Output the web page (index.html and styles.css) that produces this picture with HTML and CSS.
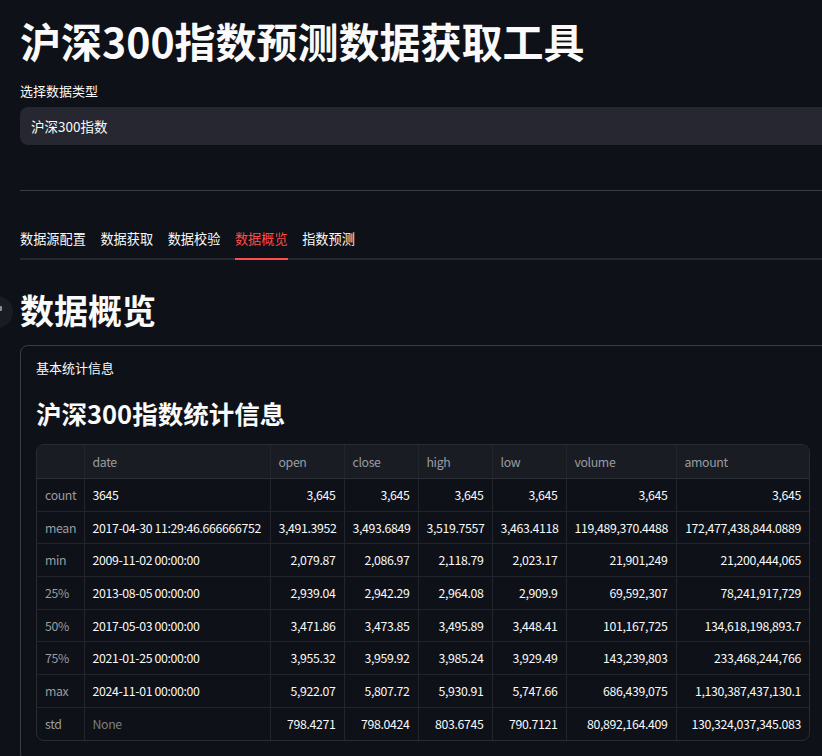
FILE: index.html
```html
<!DOCTYPE html>
<html lang="zh">
<head>
<meta charset="utf-8">
<title>沪深300指数预测数据获取工具</title>
<link rel="stylesheet" href="styles.css">
</head>
<body>
<div class="main">
  <h1 class="title">沪深300指数预测数据获取工具</h1>
  <div class="label">选择数据类型</div>
  <div class="select">沪深300指数</div>
  <div class="rule"></div>
  <div class="tabs">
    <div class="tab">数据源配置</div>
    <div class="tab">数据获取</div>
    <div class="tab">数据校验</div>
    <div class="tab active">数据概览</div>
    <div class="tab">指数预测</div>
  </div>
  <div class="section-head">
    <span class="side-btn"></span>
    <h2 class="h2">数据概览</h2>
  </div>
  <div class="box">
    <div class="box-label">基本统计信息</div>
    <h3 class="h3">沪深300指数统计信息</h3>
    <div class="grid-wrap">
      <table class="grid">
        <colgroup>
          <col class="c-idx"><col class="c-date"><col class="c-num"><col class="c-num"><col class="c-num"><col class="c-num"><col class="c-vol"><col class="c-amt">
        </colgroup>
        <thead>
          <tr><th></th><th>date</th><th>open</th><th>close</th><th>high</th><th>low</th><th>volume</th><th>amount</th></tr>
        </thead>
        <tbody>
          <tr><td class="idx">count</td><td>3645</td><td class="n">3,645</td><td class="n">3,645</td><td class="n">3,645</td><td class="n">3,645</td><td class="n">3,645</td><td class="n">3,645</td></tr>
          <tr><td class="idx">mean</td><td>2017-04-30 11:29:46.666666752</td><td class="n">3,491.3952</td><td class="n">3,493.6849</td><td class="n">3,519.7557</td><td class="n">3,463.4118</td><td class="n">119,489,370.4488</td><td class="n">172,477,438,844.0889</td></tr>
          <tr><td class="idx">min</td><td>2009-11-02 00:00:00</td><td class="n">2,079.87</td><td class="n">2,086.97</td><td class="n">2,118.79</td><td class="n">2,023.17</td><td class="n">21,901,249</td><td class="n">21,200,444,065</td></tr>
          <tr><td class="idx">25%</td><td>2013-08-05 00:00:00</td><td class="n">2,939.04</td><td class="n">2,942.29</td><td class="n">2,964.08</td><td class="n">2,909.9</td><td class="n">69,592,307</td><td class="n">78,241,917,729</td></tr>
          <tr><td class="idx">50%</td><td>2017-05-03 00:00:00</td><td class="n">3,471.86</td><td class="n">3,473.85</td><td class="n">3,495.89</td><td class="n">3,448.41</td><td class="n">101,167,725</td><td class="n">134,618,198,893.7</td></tr>
          <tr><td class="idx">75%</td><td>2021-01-25 00:00:00</td><td class="n">3,955.32</td><td class="n">3,959.92</td><td class="n">3,985.24</td><td class="n">3,929.49</td><td class="n">143,239,803</td><td class="n">233,468,244,766</td></tr>
          <tr><td class="idx">max</td><td>2024-11-01 00:00:00</td><td class="n">5,922.07</td><td class="n">5,807.72</td><td class="n">5,930.91</td><td class="n">5,747.66</td><td class="n">686,439,075</td><td class="n">1,130,387,437,130.1</td></tr>
          <tr><td class="idx">std</td><td class="none">None</td><td class="n">798.4271</td><td class="n">798.0424</td><td class="n">803.6745</td><td class="n">790.7121</td><td class="n">80,892,164.409</td><td class="n">130,324,037,345.083</td></tr>
        </tbody>
      </table>
    </div>
  </div>
</div>
</body>
</html>
```
FILE: styles.css
```css
html, body {
  margin: 0;
  padding: 0;
  overflow: hidden;
  background: #0e1117;
}
body {
  color: #fafafa;
  font-family: "Noto Sans CJK SC", "Noto Sans", sans-serif;
}
.main {
  width: 840px;
  padding-left: 20px;
}
.title {
  margin: 15px 0 0;
  font-size: 41px;
  line-height: 50px;
  font-weight: 700;
}
.label {
  margin-top: 16px;
  font-size: 13px;
  line-height: 20px;
}
.select {
  margin-top: 6px;
  height: 38px;
  line-height: 38px;
  background: #262730;
  border-radius: 8px;
  padding-left: 11px;
  font-size: 13.5px;
}
.rule {
  margin-top: 45px;
  height: 1px;
  background: #3b3d44;
}
.tabs {
  margin-top: 38px;
  display: flex;
  gap: 14.5px;
  border-bottom: 2px solid #26282f;
}
.tab {
  font-size: 13.2px;
  line-height: 20px;
  padding-bottom: 9px;
  margin-bottom: -2px;
  border-bottom: 2px solid transparent;
}
.tab.active {
  color: #ff4b4b;
  border-bottom-color: #ff4b4b;
}
.section-head {
  position: relative;
  margin-top: 29px;
}
.side-btn {
  position: absolute;
  left: -39px;
  top: 7px;
  width: 32px;
  height: 32px;
  border-radius: 50%;
  background: #1a1c23;
}
.side-btn::after {
  content: "";
  position: absolute;
  left: 18px;
  top: 10px;
  width: 3px;
  height: 5px;
  border-radius: 1px;
  background: #8b8d93;
}
.h2 {
  position: relative;
  margin: 0;
  font-size: 34px;
  line-height: 42px;
  font-weight: 700;
}
.box {
  margin-top: 14px;
  border: 1px solid #3b3d44;
  border-radius: 8px;
  padding: 12px 15px 20px;
}
.box-label {
  font-size: 13px;
  line-height: 20px;
}
.h3 {
  margin: 19px 0 0;
  font-size: 25.5px;
  line-height: 32px;
  font-weight: 700;
}
.grid-wrap {
  margin-top: 15px;
  width: 772px;
  border: 1px solid #2a2c33;
  border-radius: 8px;
  overflow: hidden;
}
.grid {
  width: 772px;
  border-collapse: collapse;
  border-style: hidden;
  table-layout: fixed;
  font-size: 12.3px;
  letter-spacing: -0.35px;
}
.c-idx { width: 47px; }
.c-date { width: 186px; }
.c-num { width: 74px; }
.c-vol { width: 110px; }
.c-amt { width: 133px; }
.grid th, .grid td {
  border: 1px solid #23252c;
  padding: 0 8px;
  white-space: nowrap;
  overflow: hidden;
  text-align: left;
  font-weight: 400;
}
.grid th {
  height: 33px;
  background: #1a1c23;
  color: #9a9ca2;
  border-bottom-color: #2e3037;
}
.grid td {
  height: 31.7px;
  color: #fafafa;
}
.grid td.n {
  text-align: right;
}
.grid td.idx {
  color: #9a9ca2;
}
.grid td.none {
  color: #7b7d82;
}
```
